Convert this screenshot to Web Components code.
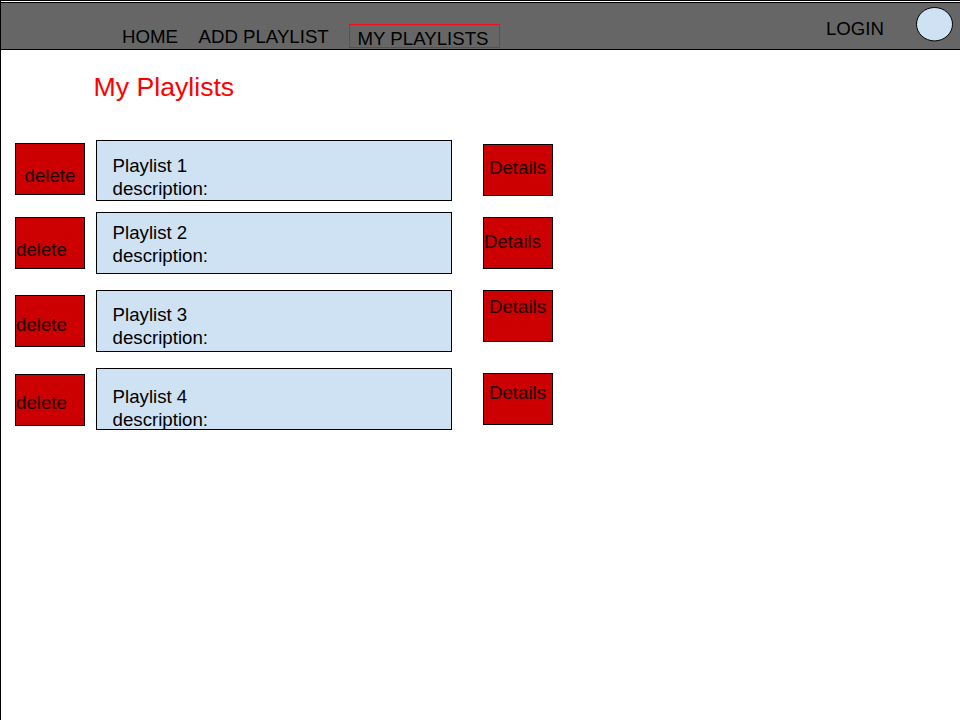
<!DOCTYPE html>
<html lang="en">
<head>
<meta charset="utf-8">
<title>My Playlists</title>
<style>
body { margin: 0; background: #fff; font-family: "Liberation Sans", Arial, sans-serif; }
</style>
</head>
<body>
<playlist-app></playlist-app>
<script>
const define = (name, html) => {
  const t = document.createElement('template');
  t.innerHTML = html;
  customElements.define(name, class extends HTMLElement {
    constructor() {
      super();
      this.attachShadow({ mode: 'open' }).append(t.content.cloneNode(true));
    }
  });
};

define('nav-item', `
<style>
:host { display: block; box-sizing: border-box; white-space: nowrap; line-height: 22px; margin-top: 23px; }
:host([active]) { flex: none; width: 151px; height: 24px; margin: 21px 0 0 auto; padding: 3px 0 0 7.5px; border: 1px solid #f01018; }
</style><slot></slot>`);

define('user-avatar', `
<style>:host { display: block; width: 38px; height: 35px; } svg { display: block; }</style>
<svg width="38" height="35" viewBox="0 0 38 35"><ellipse cx="18.5" cy="17.2" rx="18" ry="16.7" fill="#cfe2f3" stroke="#000"/></svg>`);

define('top-bar', `
<style>
:host { display: flex; box-sizing: border-box; height: 48px; padding-left: 121px; background: #666; border: solid #000; border-width: 1px 0; color: #000; }
.links { display: flex; flex: none; width: 378px; align-items: flex-start; }
.links ::slotted(:nth-child(2)) { margin-left: 20.5px; }
.login { margin: 15px 32px 0 auto; line-height: 22px; }
user-avatar { margin: 4px 6px 0 0; }
</style>
<div class="links"><slot></slot></div>
<div class="login">LOGIN</div>
<user-avatar></user-avatar>`);

define('action-button', `
<style>
:host { display: block; box-sizing: border-box; width: 70px; height: 52px; margin-top: var(--drop, 0); padding: var(--inset) 0 0 var(--indent, 0); background: #c00; border: 1px solid #000; line-height: 22px; color: #1a0000; cursor: pointer; }
</style><slot></slot>`);

define('playlist-card', `
<style>
:host { display: block; box-sizing: border-box; width: 356px; height: var(--h, 62px); padding: var(--inset) 0 0 15.6px; background: #cfe2f3; border: 1px solid #000; line-height: 22.5px; }
</style>
<slot></slot><div>description:</div>`);

define('playlist-row', `
<style>
:host { display: grid; grid-template-columns: 70px 356px 70px; align-items: start; column-gap: 11px; }
::slotted(:last-child) { margin-left: 20px; }
</style><slot></slot>`);

define('playlist-app', `
<style>
:host { display: block; box-sizing: border-box; height: 720px; border: solid #000; border-width: 1px 0 0 1px; padding-top: 1px; font-size: 18.667px; overflow: hidden; }
h1 { margin: 22px 0 0 92.5px; font-size: 26.667px; line-height: 30px; font-weight: 400; color: #f00; }
.list { padding: 38px 0 0 14px; }
</style>
<top-bar><nav-item>HOME</nav-item><nav-item>ADD PLAYLIST</nav-item><nav-item active>MY PLAYLISTS</nav-item></top-bar>
<main>
<h1>My Playlists</h1>
<div class="list">
<playlist-row style="height:72px">
 <action-button style="--drop:3px;--inset:21px;--indent:8.5px">delete</action-button>
 <playlist-card style="--h:61px;--inset:14px">Playlist 1</playlist-card>
 <action-button style="--drop:4px;--inset:12px;--indent:5px">Details</action-button>
</playlist-row>
<playlist-row style="height:78px">
 <action-button style="--drop:5px;--inset:21px">delete</action-button>
 <playlist-card style="--inset:9px">Playlist 2</playlist-card>
 <action-button style="--drop:5px;--inset:13px">Details</action-button>
</playlist-row>
<playlist-row style="height:78px">
 <action-button style="--drop:5px;--inset:18px">delete</action-button>
 <playlist-card style="--inset:13px">Playlist 3</playlist-card>
 <action-button style="--inset:5px;--indent:5px">Details</action-button>
</playlist-row>
<playlist-row>
 <action-button style="--drop:6px;--inset:17px">delete</action-button>
 <playlist-card style="--inset:17px">Playlist 4</playlist-card>
 <action-button style="--drop:5px;--inset:8px;--indent:5px">Details</action-button>
</playlist-row>
</div>
</main>`);
</script>
</body>
</html>
